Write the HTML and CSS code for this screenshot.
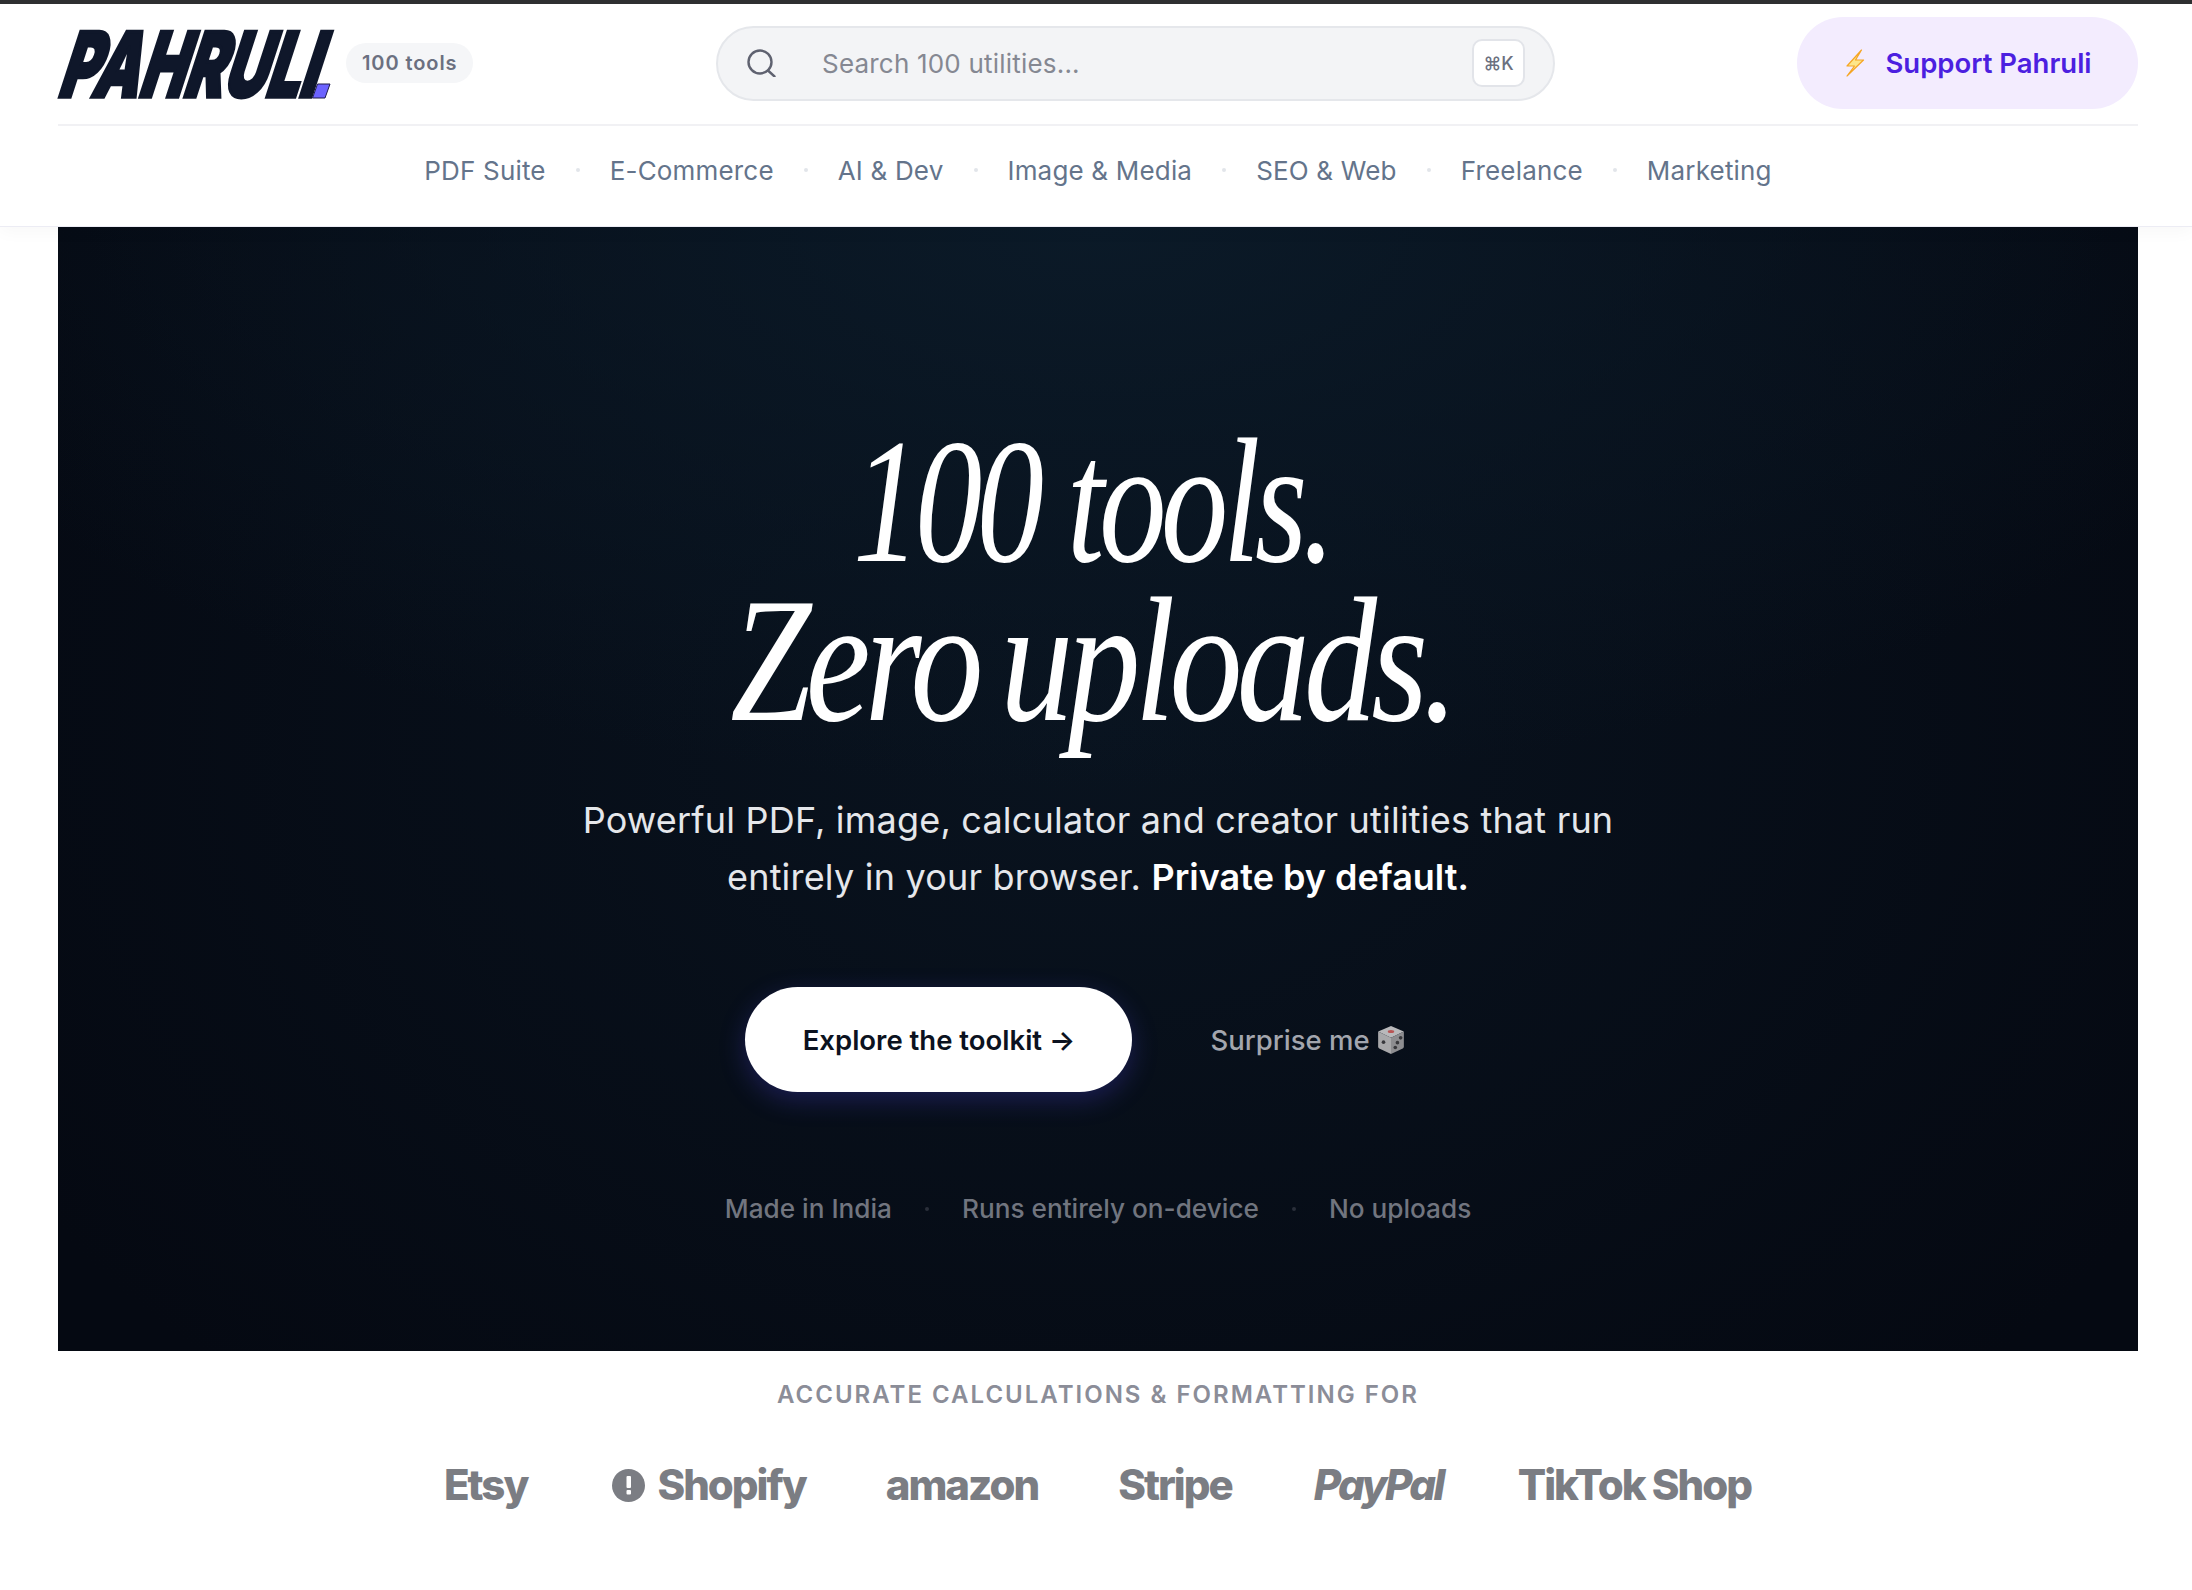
FILE: index.html
```html
<!DOCTYPE html>
<html lang="en">
<head>
<meta charset="utf-8">
<title>Pahruli</title>
<link rel="stylesheet" href="styles.css">
</head>
<body>
<header class="header">
  <div class="topbar">
    <div class="brand">
      <svg class="logo" viewBox="0 0 280 72" width="280" height="72" aria-label="PAHRULI">
        <text class="logo-text" x="0" y="70" transform="translate(21 0) skewX(-18)" textLength="258" lengthAdjust="spacingAndGlyphs">PAHRULI</text>
        <polygon class="logo-dot" points="254.5,71 259.5,57 272,57 267,71" />
      </svg>
      <span class="badge">100 tools</span>
    </div>
    <div class="search">
      <svg class="search-icon" viewBox="0 0 29 28" width="29" height="28" fill="none">
        <circle cx="13" cy="13" r="11.5" />
        <path d="M21 21.5l6.5 6" />
      </svg>
      <span class="search-text">Search 100 utilities...</span>
      <kbd class="kbd">⌘K</kbd>
    </div>
    <a class="support" href="#">
      <svg class="bolt" viewBox="0 0 20 28" width="20" height="28">
        <path d="M16.5 1 2 17h7.5L2 27 18.5 11h-8z" />
      </svg>
      <span>Support Pahruli</span>
    </a>
  </div>
  <nav class="nav">
    <a>PDF Suite</a><i class="dot"></i>
    <a>E-Commerce</a><i class="dot"></i>
    <a>AI &amp; Dev</a><i class="dot"></i>
    <a>Image &amp; Media</a><i class="dot"></i>
    <a>SEO &amp; Web</a><i class="dot"></i>
    <a>Freelance</a><i class="dot"></i>
    <a>Marketing</a>
  </nav>
</header>
<main>
  <section class="hero">
    <h1 class="title"><span class="title-one">100 tools.</span><span class="title-two">Zero uploads.</span></h1>
    <p class="lead">Powerful PDF, image, calculator and creator utilities that run<br>entirely in your browser. <strong>Private by default.</strong></p>
    <div class="actions">
      <a class="primary" href="#">Explore the toolkit →</a>
      <a class="secondary" href="#">Surprise me
        <svg class="die" viewBox="0 0 28 28" width="30" height="30">
          <path class="die-top" d="M14 1 26 6 14 12 2 6z" />
          <path class="die-left" d="M2 6l12 6v15L3 22q-1-.5-1-2z" />
          <path class="die-right" d="M26 6 14 12v15l11-5q1-.5 1-2z" />
          <ellipse class="die-red" cx="14" cy="6" rx="3" ry="1.4" />
          <circle class="die-pip" cx="7" cy="16" r="1.7" />
          <circle class="die-pip" cx="18" cy="21" r="1.7" />
          <circle class="die-pip" cx="20" cy="16.5" r="1.7" />
          <circle class="die-pip" cx="23" cy="12" r="1.7" />
        </svg>
      </a>
    </div>
    <div class="facts">
      <span>Made in India</span><i class="fact-dot"></i>
      <span>Runs entirely on-device</span><i class="fact-dot"></i>
      <span>No uploads</span>
    </div>
  </section>
  <section class="trust">
    <p class="trust-label">ACCURATE CALCULATIONS &amp; FORMATTING FOR</p>
    <div class="brands">
      <span>Etsy</span>
      <span class="shopify"><svg class="shop-icon" viewBox="0 0 33 33" width="33" height="33"><circle class="shop-disc" cx="16.5" cy="16.5" r="16.5" /><rect class="shop-mark" x="14.5" y="7" width="4.5" height="12" rx="1" /><rect class="shop-mark" x="14.5" y="21" width="4.5" height="4.5" rx="1" /></svg>Shopify</span>
      <span>amazon</span>
      <span>Stripe</span>
      <span class="paypal">PayPal</span>
      <span>TikTok Shop</span>
    </div>
  </section>
</main>
</body>
</html>
```
FILE: styles.css
```css
* { box-sizing: border-box; }
html, body { margin: 0; padding: 0; }
body {
  height: 1590px;
  overflow: hidden;
  background: #fff;
  font-family: Inter, "Liberation Sans", sans-serif;
  color: #111827;
}
a { text-decoration: none; color: inherit; }

.header {
  position: relative;
  z-index: 2;
  height: 226px;
  padding: 0 54px 0 58px;
  border-top: 4px solid #2e2f31;
  background: #fff;
  box-shadow: 0 1px 0 #ececf4, 0 6px 16px rgba(17, 24, 39, 0.03);
}
.topbar {
  display: flex;
  align-items: center;
  justify-content: space-between;
  height: 122px;
  border-bottom: 2px solid #f1f1f4;
  padding-bottom: 2px;
}
.brand { display: flex; align-items: center; gap: 9px; width: 416px; }
.logo { display: block; overflow: visible; flex: none; }
.logo-text {
  font-family: Inter, "Liberation Sans", sans-serif;
  font-weight: 900;
  font-size: 90px;
  fill: #0f172a;
  stroke: #0f172a;
  stroke-width: 3.5px;
}
.logo-dot { fill: #6c63ff; stroke: #1e1b4b; stroke-width: 1px; }
.badge {
  margin-left: -1px;
  padding: 0 16px;
  height: 40px;
  line-height: 40px;
  border-radius: 20px;
  background: #f5f6f8;
  color: #6b7080;
  font-size: 20px;
  font-weight: 600;
  letter-spacing: 0.9px;
  white-space: nowrap;
}
.search {
  display: flex;
  align-items: center;
  width: 839px;
  height: 75px;
  padding: 0 28px 0 29px;
  border: 2px solid #e5e7eb;
  border-radius: 38px;
  background: #f3f4f6;
}
.search-icon { flex: none; stroke: #5f6270; stroke-width: 2.4px; stroke-linecap: round; }
.search-text { flex: 1; margin-left: 46px; font-size: 26px; letter-spacing: 0.2px; color: #858892; white-space: nowrap; }
.kbd {
  display: flex;
  align-items: center;
  justify-content: center;
  width: 53px;
  height: 48px;
  border: 2px solid #e2e4e9;
  border-radius: 10px;
  background: #fff;
  color: #6b7080;
  font-family: Inter, "DejaVu Sans", sans-serif;
  font-size: 18px;
  font-weight: 500;
}
.support {
  display: flex;
  align-items: center;
  justify-content: center;
  gap: 20px;
  width: 341px;
  height: 92px;
  padding-left: 2px;
  border-radius: 46px;
  background: #f3ecfe;
  color: #4c1fe0;
  font-size: 27.5px;
  font-weight: 600;
  white-space: nowrap;
}
.bolt { fill: #fde68a; stroke: #f5a524; stroke-width: 1.2px; stroke-linejoin: round; flex: none; }
.nav {
  display: flex;
  align-items: center;
  justify-content: center;
  gap: 30px;
  height: 88px;
  color: #64748b;
  font-size: 26px;
  letter-spacing: 0.18px;
  white-space: nowrap;
}
.dot { width: 4px; height: 4px; border-radius: 50%; background: #e2e5ea; flex: none; }

.hero {
  display: flex;
  flex-direction: column;
  align-items: center;
  height: 1125px;
  margin: 0 54px 0 58px;
  padding-top: 196px;
  background:
    radial-gradient(ellipse 60% 50% at 50% 0%, #0b1a28 0%, rgba(11, 26, 40, 0) 100%),
    radial-gradient(ellipse 60% 80% at 50% 45%, #09131f 0%, rgba(9, 19, 31, 0) 100%),
    #050912;
  color: #fff;
}
.title {
  margin: 0 13px 0 0;
  font-family: "Liberation Serif", serif;
  font-style: italic;
  font-weight: 400;
  font-size: 178px;
  line-height: 159px;
  letter-spacing: -7px;
  text-align: center;
  white-space: nowrap;
}
.title-one, .title-two { display: block; }
.title-one { transform: scaleX(0.755); }
.title-two { transform: scaleX(0.82); word-spacing: -10px; }
.lead {
  margin: 52px 0 0;
  font-size: 36px;
  line-height: 57px;
  letter-spacing: 0.2px;
  color: #e5e7eb;
  text-align: center;
  white-space: nowrap;
}
.lead strong { font-weight: 600; color: #fff; letter-spacing: 0; }
.actions {
  display: flex;
  align-items: center;
  gap: 78px;
  margin-top: 81px;
  margin-right: 45px;
}
.primary {
  display: flex;
  align-items: center;
  justify-content: center;
  width: 387px;
  height: 105px;
  border-radius: 53px;
  background: #fff;
  color: #0b1220;
  font-size: 27.5px;
  font-weight: 600;
  white-space: nowrap;
  box-shadow: 0 8px 26px rgba(79, 70, 229, 0.28);
}
.secondary {
  display: flex;
  align-items: center;
  gap: 6px;
  color: #a3a6ae;
  font-size: 27.5px;
  font-weight: 500;
  white-space: nowrap;
}
.die { flex: none; }
.die-top { fill: #b9b9bb; }
.die-left { fill: #a8a8aa; }
.die-right { fill: #8d8d90; }
.die-red { fill: #b85454; }
.die-pip { fill: #38383c; }
.facts {
  display: flex;
  align-items: center;
  gap: 33px;
  margin-top: 101px;
  color: #71757f;
  font-size: 26.2px;
  font-weight: 500;
  white-space: nowrap;
}
.fact-dot { width: 4px; height: 4px; border-radius: 50%; background: #2a2f3a; flex: none; }

.trust { padding: 29px 0 0; text-align: center; }
.trust-label {
  margin: 0;
  padding-left: 4px;
  color: #8b8d98;
  font-size: 24px;
  line-height: 30px;
  font-weight: 600;
  letter-spacing: 2px;
  white-space: nowrap;
}
.brands {
  display: flex;
  align-items: center;
  justify-content: center;
  gap: 80px;
  margin-top: 50px;
  padding-left: 3px;
  color: #7b7d83;
  font-size: 42px;
  line-height: 50px;
  font-weight: 800;
  letter-spacing: -2px;
  white-space: nowrap;
}
.shopify { display: flex; align-items: center; gap: 12px; margin-left: 5px; }
.shop-disc { fill: #7b7d83; }
.shop-mark { fill: #fff; }
.paypal { font-style: italic; letter-spacing: -2.6px; margin: 0 -5px 0 2px; }
```
